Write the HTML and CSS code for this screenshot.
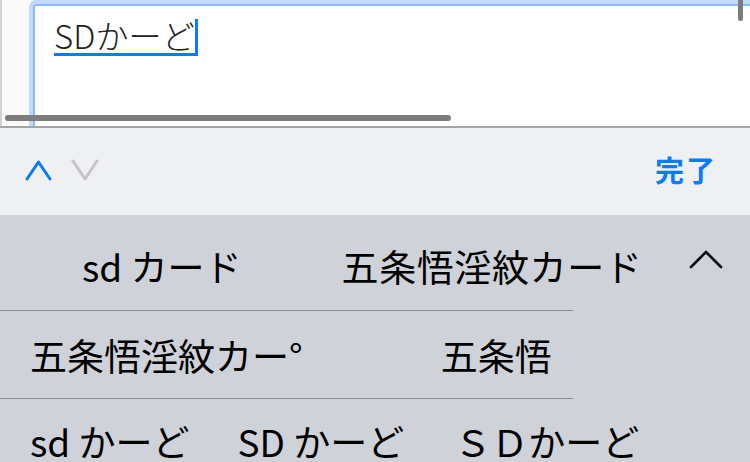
FILE: index.html
```html
<!DOCTYPE html>
<html lang="ja">
<head>
    <meta charset="UTF-8">
    <title>入力候補</title>
    <link rel="stylesheet" href="styles.css">
</head>
<body>
    <div class="editor">
        <div class="gutter"></div>
        <div class="field">
            <div class="field-text"><span class="marked">SDかーど</span><span class="cursor"></span></div>
        </div>
        <div class="scroll-v"></div>
        <div class="scroll-h"></div>
    </div>

    <div class="toolbar">
        <div class="arrows">
            <svg class="arrow" width="27" height="22" viewBox="0 0 27 22">
                <polyline points="2,20 13.5,3 25,20" fill="none" stroke="#0a7aff" stroke-width="3" stroke-linecap="round" stroke-linejoin="round"/>
            </svg>
            <svg class="arrow" width="28" height="22" viewBox="0 0 28 22">
                <polyline points="2,2 14,20 26,2" fill="none" stroke="#c4c4c6" stroke-width="3" stroke-linecap="round" stroke-linejoin="round"/>
            </svg>
        </div>
        <span class="done">完了</span>
    </div>

    <div class="candidates">
        <div class="row row-1">
            <span class="cand">sd カード</span>
            <span class="cand cand-wide">五条悟淫紋カード</span>
            <svg class="more" width="36" height="22" viewBox="0 0 36 22">
                <polyline points="3,19 18,4 33,19" fill="none" stroke="#000" stroke-width="2.6" stroke-linecap="round" stroke-linejoin="round"/>
            </svg>
        </div>
        <div class="sep"></div>
        <div class="row row-2">
            <span class="cand">五条悟淫紋カー°</span>
            <span class="cand">五条悟</span>
        </div>
        <div class="sep"></div>
        <div class="row row-3">
            <span class="cand">sd かーど</span>
            <span class="cand">SD かーど</span>
            <span class="cand">ＳＤかーど</span>
        </div>
    </div>
</body>
</html>
```

FILE: styles.css
```css
html, body {
    margin: 0;
    padding: 0;
}

body {
    width: 750px;
    height: 462px;
    overflow: hidden;
    font-family: "Noto Sans CJK JP", "Noto Sans", sans-serif;
    background: #cfd2d8;
}

.editor {
    position: relative;
    display: flex;
    height: 126px;
    overflow: hidden;
    background: #fafafa;
    border-bottom: 2px solid #a4a4a6;
}

.gutter {
    width: 27px;
    flex: none;
    border-left: 2px solid #d2d2d2;
}

.field {
    flex: none;
    width: 760px;
    height: 160px;
    background: #fff;
    border: 4px solid #c2d9fc;
    border-radius: 7px 0 0 0;
    box-shadow: inset 0 0 0 2px #8cb9fd;
}

.field-text {
    display: flex;
    align-items: flex-end;
    padding: 13px 0 0 21px;
    font-size: 33px;
    font-weight: 300;
    line-height: 38px;
    color: #222;
}

.marked {
    display: inline-block;
    height: 36px;
    line-height: 36px;
    border-bottom: 3px solid #0a7aff;
    letter-spacing: 0.1px;
}

.cursor {
    display: inline-block;
    width: 3px;
    height: 37px;
    background: #0a7aff;
}

.scroll-v {
    position: absolute;
    right: 7px;
    top: -4px;
    width: 5px;
    height: 25px;
    border-radius: 3px;
    background: #7c7c7c;
}

.scroll-h {
    position: absolute;
    left: 5px;
    top: 115px;
    width: 446px;
    height: 6px;
    border-radius: 3px;
    background: #7d7d7d;
}

.toolbar {
    display: flex;
    align-items: center;
    justify-content: space-between;
    height: 87px;
    padding: 0 33px 0 25px;
    background: #eff0f2;
}

.arrows {
    display: flex;
    gap: 19px;
    margin-bottom: 4px;
}

.done {
    font-size: 29px;
    font-weight: 700;
    color: #0a7aff;
    letter-spacing: 2px;
    margin-bottom: 6px;
}

.candidates {
    color: #000;
    font-size: 37px;
}

.row {
    display: flex;
    align-items: center;
    white-space: nowrap;
}

.row-1 {
    height: 95px;
    padding-left: 82px;
    padding-top: 6px;
    box-sizing: border-box;
}

.row-1 .cand-wide {
    margin-left: 100px;
    letter-spacing: 0.6px;
}

.row-1 .more {
    margin-left: auto;
    margin-right: 26px;
    margin-bottom: 14px;
}

.row-2 {
    height: 87px;
    padding-left: 30px;
    gap: 138px;
}

.row-3 {
    height: 80px;
    padding-left: 30px;
    padding-top: 2px;
}

.row-3 .cand:nth-child(2) {
    margin-left: 48px;
}

.row-3 .cand:nth-child(3) {
    margin-left: 50px;
}

.sep {
    width: 573px;
    height: 1px;
    background: #8c8c90;
}
```
